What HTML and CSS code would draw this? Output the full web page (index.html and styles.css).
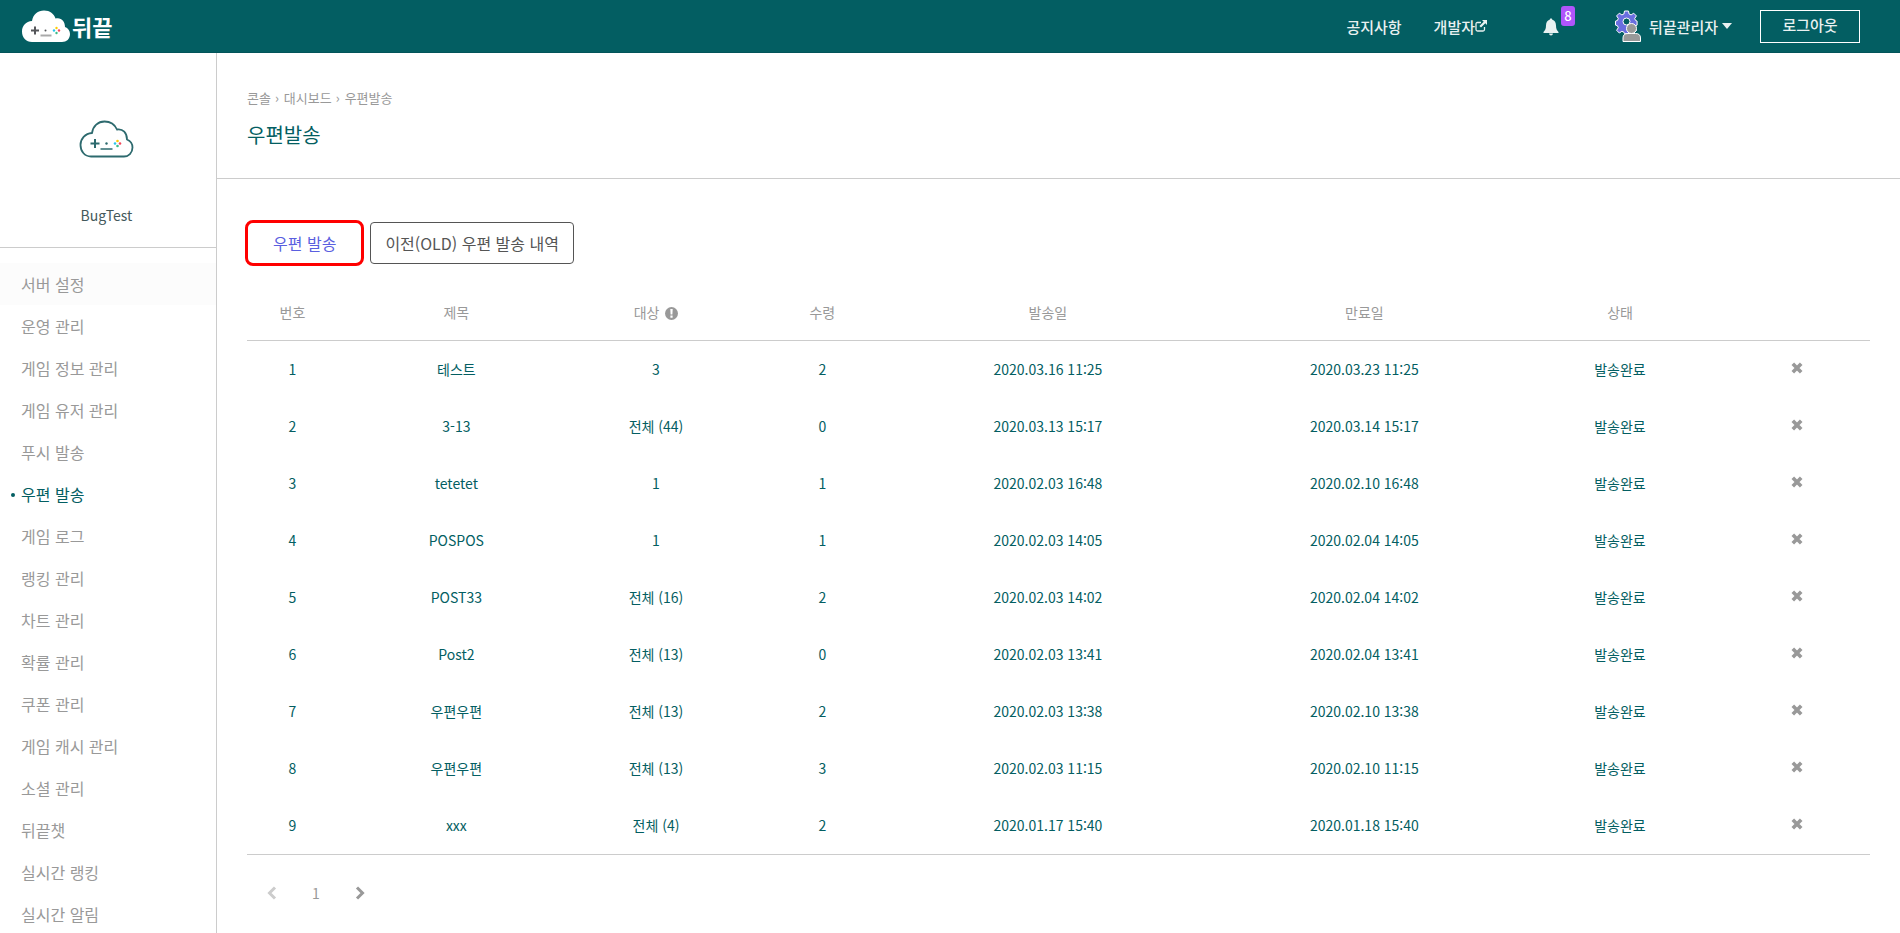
FILE: index.html
```html
<!DOCTYPE html>
<html lang="ko">
<head>
    <meta charset="UTF-8">
    <meta name="viewport" content="width=device-width, initial-scale=1.0">
    <title>우편발송</title>
    <link rel="stylesheet" href="styles.css">
</head>
<body>
    <!-- 공통 아이콘 -->
    <svg class="sprite" aria-hidden="true">
        <symbol id="icon-close" viewBox="0 0 10 10">
            <path d="M2 2l6 6M8 2l-6 6" fill="none" stroke="currentColor" stroke-width="2.6"/>
        </symbol>
    </svg>

    <header class="header">
        <a class="logo" href="#">
            <svg width="50" height="34" viewBox="0 0 50 34" aria-hidden="true">
                <path d="M11 33C5 33 1 28.5 1 22.5S5 12.500 11 12C12 5.500 17 1.500 23 1.500S33 5 34.500 9.500C40 8 44 12 44 18C47 19 49 22 49 25C49 30 45.500 33 41 33Z" fill="#fff"/>
                <path d="M10 21.500h8M14 17.500v8" stroke="#55565a" stroke-width="2"/>
                <path d="M19.500 26.500h11" stroke="#aaa" stroke-width="2"/>
                <circle cx="24.500" cy="21.500" r="1" fill="#55565a"/>
                <circle cx="35.500" cy="19" r="1.200" fill="#fc0"/>
                <circle cx="38" cy="21.500" r="1.200" fill="#f5475b"/>
                <circle cx="35.500" cy="24" r="1.200" fill="#3dbb88"/>
                <circle cx="33" cy="21.500" r="1.200" fill="#2bc4e8"/>
            </svg>
            <span class="logo-text">뒤끝</span>
        </a>
        <nav class="header-menu">
            <a class="menu-notice" href="#">공지사항</a>
            <a class="menu-dev" href="#">개발자<svg width="12" height="12" viewBox="0 0 12 12" aria-hidden="true">
                <path d="M6 2.500H2.500Q1 2.500 1 4V9.500Q1 11 2.500 11H8Q9.500 11 9.500 9.500V7" fill="none" stroke="currentColor" stroke-width="1.300"/>
                <path d="M7 0h5v5l-1.700-1.700L6 7.600 4.400 6l4.300-4.300z" fill="currentColor"/>
            </svg></a>
            <button class="menu-alarm" type="button" aria-label="알림">
                <svg width="16" height="18" viewBox="0 0 16 18" aria-hidden="true">
                    <path d="M8 0.500C8.800 0.500 9.300 1 9.300 1.800C11.800 2.400 13 4.500 13 7.500C13 11 14 12.500 15.500 14V15H0.500V14C2 12.500 3 11 3 7.500C3 4.500 4.200 2.400 6.700 1.800C6.700 1 7.200 0.500 8 0.500ZM6 15.500h4Q9.800 17.500 8 17.500T6 15.500Z" fill="#e9f1f1"/>
                </svg>
                <span class="badge">8</span>
            </button>
            <button class="menu-user" type="button">
                <!-- 톱니바퀴 + 사람 -->
                <svg width="28" height="34" viewBox="0 0 28 34" aria-hidden="true">
                    <path d="M9.500 2h4l.6 3 2 .9 2.600-1.700 2.700 2.700-1.700 2.600.9 2 1.500.6v4l-1.500.6-.9 2 1.700 2.600-2.700 2.700-2.600-1.700-2 .9-.6 1.500h-4l-.6-1.500-2-.9-2.600 1.700-2.700-2.700 1.700-2.600-.9-2-1.900-.6v-4l1.900-.6.900-2-1.700-2.600 2.700-2.700 2.600 1.700 2-.9z" fill="#6a6ee0" stroke="#fff"/>
                    <circle cx="11.500" cy="12.500" r="3.500" fill="#035e62" stroke="#fff"/>
                    <path d="M8 32.500V29Q8 24.500 13 24.500H20.500Q25.500 24.500 25.500 29V32.500Z" fill="#999" stroke="#fff"/>
                    <circle cx="16.500" cy="19.500" r="5" fill="#999" stroke="#fff"/>
                </svg>
                뒤끝관리자
                <span class="caret"></span>
            </button>
            <button class="logout" type="button">로그아웃</button>
        </nav>
    </header>

    <div class="container">
        <aside class="sidebar">
            <div class="project">
                <svg width="55" height="38" viewBox="0 0 55 38" aria-hidden="true">
                    <path d="M12 36.500C5.500 36.500 1.500 31 1.500 25S6 13.500 13 13C14 6 19 1.500 25.500 1.500S36 5 38 9.500C44 8.500 48 13 48 19.500C51.500 21 53.500 24 53.500 27.500C53.500 33 49.500 36.500 45 36.500Z" fill="none" stroke="#2d6a6e" stroke-width="1.800"/>
                    <path d="M11.500 23.500h9M16 19v9" stroke="#2d6a6e" stroke-width="2"/>
                    <path d="M21.500 29h12" stroke="#2d6a6e" stroke-width="1.500"/>
                    <circle cx="27.500" cy="23.500" r="1.200" fill="#2d6a6e"/>
                    <circle cx="38.500" cy="21" r="1.300" fill="#fc0"/>
                    <circle cx="41" cy="23.500" r="1.300" fill="#f5475b"/>
                    <circle cx="38.500" cy="26" r="1.300" fill="#3dbb88"/>
                    <circle cx="36" cy="23.500" r="1.300" fill="#2bc4e8"/>
                </svg>
                <p>BugTest</p>
            </div>
            <ul class="side-menu">
                <li class="hover"><a href="#">서버 설정</a></li>
                <li><a href="#">운영 관리</a></li>
                <li><a href="#">게임 정보 관리</a></li>
                <li><a href="#">게임 유저 관리</a></li>
                <li><a href="#">푸시 발송</a></li>
                <li class="active"><a href="#">우편 발송</a></li>
                <li><a href="#">게임 로그</a></li>
                <li><a href="#">랭킹 관리</a></li>
                <li><a href="#">차트 관리</a></li>
                <li><a href="#">확률 관리</a></li>
                <li><a href="#">쿠폰 관리</a></li>
                <li><a href="#">게임 캐시 관리</a></li>
                <li><a href="#">소셜 관리</a></li>
                <li><a href="#">뒤끝챗</a></li>
                <li><a href="#">실시간 랭킹</a></li>
                <li><a href="#">실시간 알림</a></li>
            </ul>
        </aside>

        <main class="content">
            <div class="page-title">
                <nav class="breadcrumb">
                    <a href="#">콘솔</a><span>›</span><a href="#">대시보드</a><span>›</span><a href="#">우편발송</a>
                </nav>
                <h1>우편발송</h1>
            </div>

            <div class="page-body">
                <div class="tabs">
                    <button class="tab selected" type="button">우편 발송</button>
                    <button class="tab" type="button">이전(OLD) 우편 발송 내역</button>
                </div>

                <table class="post-table">
                    <thead>
                        <tr>
                            <th class="col-no">번호</th>
                            <th class="col-title">제목</th>
                            <th class="col-target">대상 <svg class="info" width="13" height="13" viewBox="0 0 13 13" aria-hidden="true">
                                <circle cx="6.500" cy="6.500" r="6.500" fill="#999"/>
                                <path d="M5.300 2h2.400l-.3 5.500H5.600zM5.400 8.500h2.200v2.200H5.400z" fill="#fff"/>
                            </svg></th>
                            <th class="col-receive">수령</th>
                            <th class="col-send">발송일</th>
                            <th class="col-expire">만료일</th>
                            <th class="col-state">상태</th>
                            <th class="col-delete"></th>
                        </tr>
                    </thead>
                    <tbody>
                        <tr><td>1</td><td>테스트</td><td>3</td><td>2</td><td>2020.03.16 11:25</td><td>2020.03.23 11:25</td><td>발송완료</td><td class="col-delete"><button type="button" aria-label="삭제"><svg><use href="#icon-close"/></svg></button></td></tr>
                        <tr><td>2</td><td>3-13</td><td>전체 (44)</td><td>0</td><td>2020.03.13 15:17</td><td>2020.03.14 15:17</td><td>발송완료</td><td class="col-delete"><button type="button" aria-label="삭제"><svg><use href="#icon-close"/></svg></button></td></tr>
                        <tr><td>3</td><td>tetetet</td><td>1</td><td>1</td><td>2020.02.03 16:48</td><td>2020.02.10 16:48</td><td>발송완료</td><td class="col-delete"><button type="button" aria-label="삭제"><svg><use href="#icon-close"/></svg></button></td></tr>
                        <tr><td>4</td><td>POSPOS</td><td>1</td><td>1</td><td>2020.02.03 14:05</td><td>2020.02.04 14:05</td><td>발송완료</td><td class="col-delete"><button type="button" aria-label="삭제"><svg><use href="#icon-close"/></svg></button></td></tr>
                        <tr><td>5</td><td>POST33</td><td>전체 (16)</td><td>2</td><td>2020.02.03 14:02</td><td>2020.02.04 14:02</td><td>발송완료</td><td class="col-delete"><button type="button" aria-label="삭제"><svg><use href="#icon-close"/></svg></button></td></tr>
                        <tr><td>6</td><td>Post2</td><td>전체 (13)</td><td>0</td><td>2020.02.03 13:41</td><td>2020.02.04 13:41</td><td>발송완료</td><td class="col-delete"><button type="button" aria-label="삭제"><svg><use href="#icon-close"/></svg></button></td></tr>
                        <tr><td>7</td><td>우편우편</td><td>전체 (13)</td><td>2</td><td>2020.02.03 13:38</td><td>2020.02.10 13:38</td><td>발송완료</td><td class="col-delete"><button type="button" aria-label="삭제"><svg><use href="#icon-close"/></svg></button></td></tr>
                        <tr><td>8</td><td>우편우편</td><td>전체 (13)</td><td>3</td><td>2020.02.03 11:15</td><td>2020.02.10 11:15</td><td>발송완료</td><td class="col-delete"><button type="button" aria-label="삭제"><svg><use href="#icon-close"/></svg></button></td></tr>
                        <tr><td>9</td><td>xxx</td><td>전체 (4)</td><td>2</td><td>2020.01.17 15:40</td><td>2020.01.18 15:40</td><td>발송완료</td><td class="col-delete"><button type="button" aria-label="삭제"><svg><use href="#icon-close"/></svg></button></td></tr>
                    </tbody>
                </table>

                <nav class="pagination">
                    <button class="prev" type="button" aria-label="이전" disabled>
                        <svg width="10" height="14" viewBox="0 0 10 14"><path d="M8 1.500L2.500 7L8 12.500" fill="none" stroke="currentColor" stroke-width="3"/></svg>
                    </button>
                    <a href="#">1</a>
                    <button type="button" aria-label="다음">
                        <svg width="10" height="14" viewBox="0 0 10 14"><path d="M2 1.500L7.500 7L2 12.500" fill="none" stroke="currentColor" stroke-width="3"/></svg>
                    </button>
                </nav>
            </div>
        </main>
    </div>
</body>
</html>
```

FILE: styles.css
```css
* {
    box-sizing: border-box;
}

body {
    display: flex;
    flex-direction: column;
    height: 100vh;
    margin: 0;
    overflow: hidden;
    background-color: #fff;
    color: #035e62;
    font-family: "Noto Sans CJK KR", sans-serif;
    font-size: 14px;
}

a {
    color: inherit;
    text-decoration: none;
}

button {
    padding: 0;
    border: 0;
    background: none;
    color: inherit;
    font: inherit;
    cursor: pointer;
}

svg {
    display: block;
}

.sprite {
    position: absolute;
    width: 0;
    height: 0;
}

/* 상단 헤더 */
.header {
    display: flex;
    flex-shrink: 0;
    justify-content: space-between;
    align-items: center;
    height: 53px;
    padding: 0 40px 0 21px;
    border-bottom: 1px solid #02545a;
    background-color: #035e62;
    color: #e9f1f1;
    font-size: 15px;
    font-weight: 500;
}

.logo {
    display: flex;
    align-items: center;
    gap: 1px;
    color: #fff;
}

.logo-text {
    font-size: 22px;
    font-weight: 700;
    line-height: 34px;
}

.header-menu {
    display: flex;
    align-items: center;
}

.menu-notice {
    margin-right: 32px;
}

.menu-dev {
    display: flex;
    align-items: center;
    margin-right: 56px;
}

.menu-alarm {
    position: relative;
    padding-top: 2px;
    margin-right: 56px;
}

.badge {
    position: absolute;
    top: -10px;
    left: 18px;
    width: 14px;
    border-radius: 3px;
    background-color: #af55fb;
    color: #fff;
    font-size: 13px;
    line-height: 20px;
}

.menu-user {
    display: flex;
    align-items: center;
    gap: 4px;
    margin-right: 28px;
}

.menu-user svg {
    margin-right: 2px;
}

.caret {
    border-top: 6px solid #e9f1f1;
    border-right: 5px solid transparent;
    border-left: 5px solid transparent;
}

.logout {
    width: 100px;
    height: 33px;
    padding-bottom: 3px;
    border: 1px solid #fff;
}

.container {
    display: flex;
    flex: 1;
    min-height: 0;
}

/* 사이드 메뉴 */
.sidebar {
    flex-shrink: 0;
    width: 217px;
    overflow: hidden;
    border-right: 1px solid #ccc;
    color: #999;
}

.project {
    display: flex;
    flex-direction: column;
    align-items: center;
    height: 195px;
    padding: 67px 3px 0 0;
    border-bottom: 1px solid #ccc;
    color: #44595b;
}

.project p {
    margin: 47px 0 0;
    font-size: 14px;
    line-height: 20px;
}

.side-menu {
    margin: 0;
    padding: 15px 0 0;
    list-style: none;
    font-size: 16px;
}

.side-menu a {
    display: block;
    padding-left: 21px;
    line-height: 42px;
}

.side-menu .hover {
    background-color: #fcfcfc;
}

.side-menu .active {
    position: relative;
    color: #035e62;
}

.side-menu .active::before {
    content: "";
    position: absolute;
    top: 20px;
    left: 11px;
    width: 4px;
    height: 4px;
    border-radius: 50%;
    background-color: #035e62;
}

/* 본문 */
.content {
    flex: 1;
    min-width: 0;
}

.page-title {
    height: 126px;
    padding: 35px 30px 0;
    border-bottom: 1px solid #ccc;
}

.breadcrumb {
    color: #999;
    font-size: 13px;
    line-height: 20px;
}

.breadcrumb span {
    margin: 0 5px 0 4px;
}

.page-title h1 {
    margin: 12px 0 0;
    font-size: 20px;
    font-weight: 400;
    line-height: 30px;
}

.page-body {
    padding: 43px 30px 0;
}

.tabs {
    display: flex;
    gap: 8px;
    margin-bottom: 21px;
}

.tab {
    height: 42px;
    padding: 0 14px;
    border: 1px solid #555;
    border-radius: 4px;
    color: #555;
    font-size: 16px;
}

.tab.selected {
    padding: 0 25px;
    border-color: transparent;
    outline: 3px solid #f00;
    outline-offset: -1px;
    border-radius: 6px;
    color: #5a5fe0;
}

.post-table {
    width: 100%;
    border-bottom: 1px solid #ccc;
    border-collapse: separate;
    border-spacing: 0;
    table-layout: fixed;
    text-align: center;
}

.post-table th {
    height: 56px;
    padding: 0 0 2px;
    border-bottom: 1px solid #ccc;
    color: #999;
    font-weight: 400;
}

.post-table td {
    height: 57px;
    padding: 0 0 2px;
}

.col-no { width: 5.6%; }
.col-title { width: 14.6%; }
.col-target { width: 10%; }
.col-receive { width: 10.5%; }
.col-send { width: 17.3%; }
.col-expire { width: 21.7%; }
.col-state { width: 9.8%; }

.post-table .col-delete {
    padding-left: 25px;
    color: #999;
}

.post-table td svg {
    width: 14px;
    height: 14px;
}

.info {
    display: inline-block;
    margin-left: 2px;
    vertical-align: -2px;
}

/* 페이지 번호 */
.pagination {
    display: flex;
    align-items: center;
    gap: 35px;
    padding: 27px 20px 0;
    color: #999;
    font-size: 14px;
    line-height: 22px;
}

.pagination .prev {
    color: #ccc;
}
```
